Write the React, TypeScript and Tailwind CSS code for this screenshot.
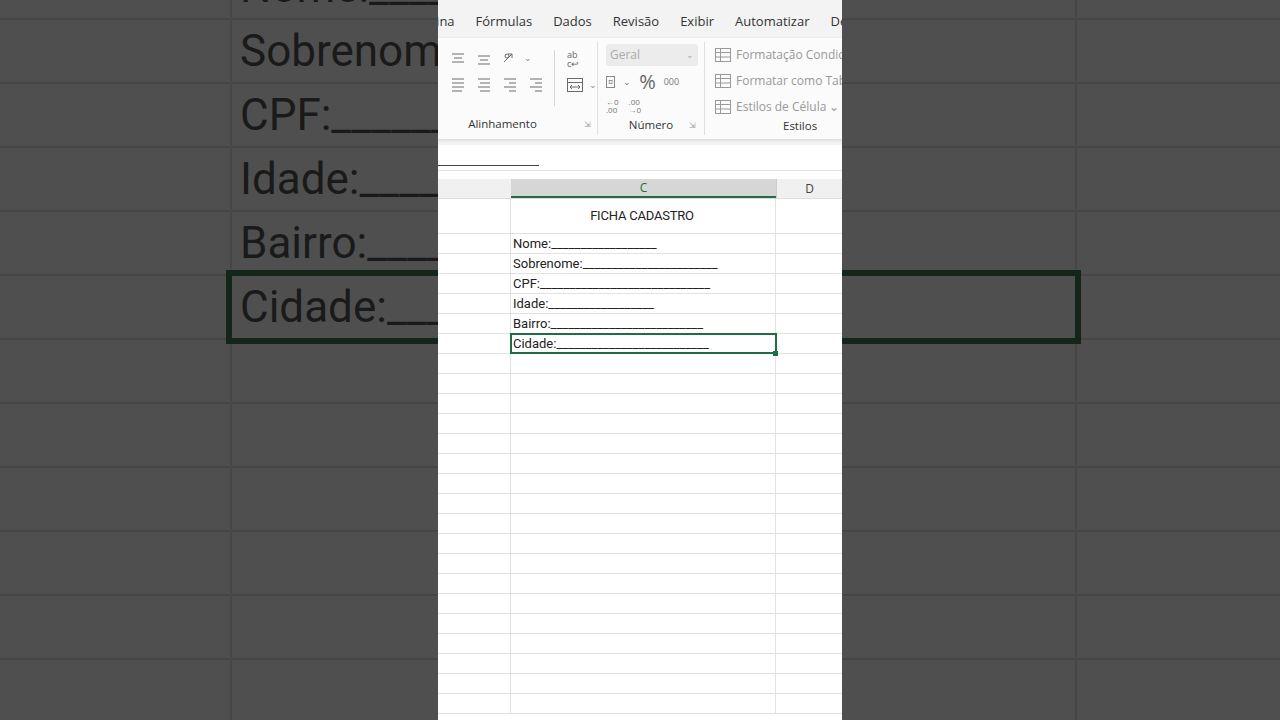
import React from "react";

const bgRows = [
  { t: "Nome:______________" },
  { t: "Sobrenome:__________________" },
  { t: "CPF:________________________" },
  { t: "Idade:______________" },
  { t: "Bairro:_____________________" },
  { t: "Cidade:_____________________", sel: true },
  { t: "" }, { t: "" }, { t: "" }, { t: "" }, { t: "" }, { t: "" },
];

const fields = [
  "Nome:__________________",
  "Sobrenome:_______________________",
  "CPF:_____________________________",
  "Idade:__________________",
  "Bairro:__________________________",
  "Cidade:__________________________",
];

const Ico = ({ children, w = 16 }: { children: React.ReactNode; w?: number }) => (
  <svg width={w} height="16" viewBox={`0 0 ${w} 16`} fill="none" stroke="#6b6b6b" strokeWidth="1">
    {children}
  </svg>
);

const Lines = ({ a }: { a: number[][] }) => (
  <Ico>{a.map((l, i) => <line key={i} x1={l[0]} y1={l[1]} x2={l[2]} y2={l[1]} />)}</Ico>
);

export default function App() {
  return (
    <div className="w-[1280px] h-[720px] overflow-hidden relative bg-[#4f4f4f]" style={{ fontFamily: "Roboto, sans-serif" }}>
      {/* blurred backdrop */}
      <div className="absolute inset-0 -top-[44px] flex flex-col">
        {bgRows.map((r, i) => (
          <div key={i} className="h-[64px] shrink-0 flex border-b-[2px] border-[#464646]">
            <div className="w-[232px] border-r-[2px] border-[#464646]" />
            <div className={`w-[843px] relative pl-[8px] flex items-center text-[44px] text-[#1a1a1a] whitespace-nowrap overflow-hidden ${r.sel ? "outline outline-[6px] outline-[#14251a]" : ""}`}>
              {r.t}
            </div>
            <div className="flex-1 border-l-[2px] border-[#464646]" />
          </div>
        ))}
      </div>

      {/* center video */}
      <div className="absolute left-[438px] top-0 w-[404px] h-[720px] bg-white overflow-hidden flex flex-col" style={{ fontFamily: "'Open Sans', 'Noto Sans', sans-serif" }}>
        <div className="h-[38px] bg-[#f3f3f3] flex items-end pb-[7px] text-[13px] text-[#333] whitespace-nowrap -ml-[24px] gap-[21px]">
          <span>Página</span><span>Fórmulas</span><span>Dados</span><span>Revisão</span><span>Exibir</span><span>Automatizar</span><span>Desenvolvedor</span>
        </div>
        <div className="h-[101px] bg-[#fbfbfb] shadow-[0_1px_3px_rgba(0,0,0,0.15)] flex text-[11.5px] text-[#333] relative z-10">
          {/* Alinhamento */}
          <div className="w-[172px] flex flex-col border-r border-[#e0e0e0] my-[4px]">
            <div className="flex-1 flex pt-[8px]">
              <div className="flex flex-col gap-[10px] pl-[12px]">
                <div className="flex gap-[10px] items-center">
                  <Lines a={[[2, 4, 14], [4, 8, 12], [2, 12, 14]]} />
                  <Lines a={[[2, 6, 14], [4, 10, 12], [2, 14, 14]]} />
                  <svg width="18" height="16" viewBox="0 0 18 16" fill="none" stroke="#6b6b6b"><path d="M2 12L10 4M10 4h-4M10 4v4" /><circle cx="5" cy="6" r="2" /></svg>
                  <span className="text-[#888] text-[9px] -ml-[6px]">⌄</span>
                </div>
                <div className="flex gap-[10px] items-center">
                  <Lines a={[[2, 3, 14], [2, 7, 14], [2, 11, 14], [2, 15, 12]]} />
                  <Lines a={[[2, 3, 14], [4, 7, 14], [2, 11, 14], [4, 15, 14]]} />
                  <Lines a={[[2, 3, 14], [7, 7, 14], [2, 11, 14], [7, 15, 14]]} />
                  <Lines a={[[2, 3, 14], [7, 7, 14], [2, 11, 14], [7, 15, 14]]} />
                </div>
              </div>
              <div className="w-px bg-[#d6d6d6] ml-[10px] h-[56px]" />
              <div className="flex flex-col gap-[10px] pl-[12px] text-[#666]">
                <span className="text-[9px] leading-[9px]">ab<br />c↩</span>
                <div className="flex items-center gap-[6px]">
                  <svg width="16" height="14" viewBox="0 0 16 14" fill="none" stroke="#6b6b6b"><rect x="0.5" y="0.5" width="15" height="13" /><line x1="0" y1="4.5" x2="16" y2="4.5" /><path d="M3 9h10M3 9l2-2M3 9l2 2M13 9l-2-2M13 9l-2 2" /></svg>
                  <span className="text-[9px] text-[#888]">⌄</span>
                </div>
              </div>
            </div>
            <div className="h-[22px] flex items-center justify-center relative pr-[30px]">Alinhamento<span className="absolute right-[6px] text-[8px] text-[#999]">⇲</span></div>
          </div>
          {/* Número */}
          <div className="w-[107px] flex flex-col border-r border-[#e0e0e0] my-[4px] px-[8px]">
            <div className="flex-1 flex flex-col gap-[6px] pt-[2px]">
              <div className="h-[22px] w-[92px] rounded-[3px] bg-[#ececec] flex items-center justify-between px-[4px] text-[#aaa] text-[12px]">Geral<span className="text-[9px]">⌄</span></div>
              <div className="flex items-center gap-[8px] text-[#777]">
                <span className="text-[9px] border border-[#888] px-[1px] leading-[10px]">¤</span><span className="text-[9px]">⌄</span>
                <span className="text-[20px] leading-[20px] text-[#666]">%</span>
                <span className="text-[9px]">000</span>
              </div>
              <div className="flex gap-[10px] text-[8px] leading-[8px] text-[#777]">
                <span>←0<br />.00</span><span>.00<br />→0</span>
              </div>
            </div>
            <div className="h-[22px] flex items-center justify-center relative">Número<span className="absolute right-0 text-[8px] text-[#999]">⇲</span></div>
          </div>
          {/* Estilos */}
          <div className="flex-1 flex flex-col my-[4px] pl-[10px] whitespace-nowrap">
            <div className="flex-1 flex flex-col gap-[8px] pt-[4px] text-[12px] text-[#999]">
              {["Formatação Condicional", "Formatar como Tabela", "Estilos de Célula ⌄"].map((s) => (
                <div key={s} className="flex items-center gap-[5px]">
                  <svg width="16" height="14" viewBox="0 0 16 14" fill="none" stroke="#999"><rect x="0.5" y="0.5" width="15" height="13" /><line x1="0" y1="4.5" x2="16" y2="4.5" /><line x1="5.5" y1="0" x2="5.5" y2="14" /><line x1="0" y1="9" x2="16" y2="9" /></svg>
                  {s}
                </div>
              ))}
            </div>
            <div className="h-[22px] flex items-center pl-[68px]">Estilos</div>
          </div>
        </div>
        <div className="h-[6px] bg-[#f3f3f3]" />
        <div className="h-[26px] bg-white flex items-end pb-[4px] border-b border-[#e3e3e3]">
          <div className="w-[101px] h-px bg-[#444]" />
        </div>
        <div className="h-[8px] bg-white" />
        {/* column headers */}
        <div className="h-[20px] flex bg-[#f0f0f0] text-[12px] text-[#444] border-b border-[#ddd]">
          <div className="w-[73px]" />
          <div className="w-[265px] bg-[#d6d6d6] border-b-2 border-[#1f6e43] flex items-center justify-center text-[#1f6e43]">C</div>
          <div className="w-[66px] flex items-center justify-center border-l border-[#ccc]">D</div>
        </div>
        {/* cells */}
        <div className="flex flex-col text-[13px] text-[#222]" style={{ fontFamily: "Roboto, sans-serif" }}>
          <div className="h-[35px] flex border-b border-[#e2e2e2]">
            <div className="w-[73px] border-r border-[#e2e2e2]" />
            <div className="w-[265px] border-r border-[#e2e2e2] flex items-center justify-center pr-[2px] tracking-[-0.2px]">FICHA CADASTRO</div>
            <div className="flex-1" />
          </div>
          {fields.map((f, i) => (
            <div key={f} className="h-[20px] flex border-b border-[#e2e2e2]">
              <div className="w-[73px] border-r border-[#e2e2e2]" />
              <div className={`w-[265px] border-r border-[#e2e2e2] flex items-center pl-[2px] whitespace-nowrap overflow-visible relative ${i === 5 ? "outline-2 outline-[#1f6e43] -outline-offset-1" : ""}`}>
                {f}
                {i === 5 && <span className="absolute -right-[3px] -bottom-[3px] w-[5px] h-[5px] bg-[#1f6e43]" />}
              </div>
              <div className="flex-1" />
            </div>
          ))}
          {Array.from({ length: 18 }).map((_, i) => (
            <div key={i} className="h-[20px] flex border-b border-[#e2e2e2]">
              <div className="w-[73px] border-r border-[#e2e2e2]" />
              <div className="w-[265px] border-r border-[#e2e2e2]" />
              <div className="flex-1" />
            </div>
          ))}
        </div>
      </div>
    </div>
  );
}
